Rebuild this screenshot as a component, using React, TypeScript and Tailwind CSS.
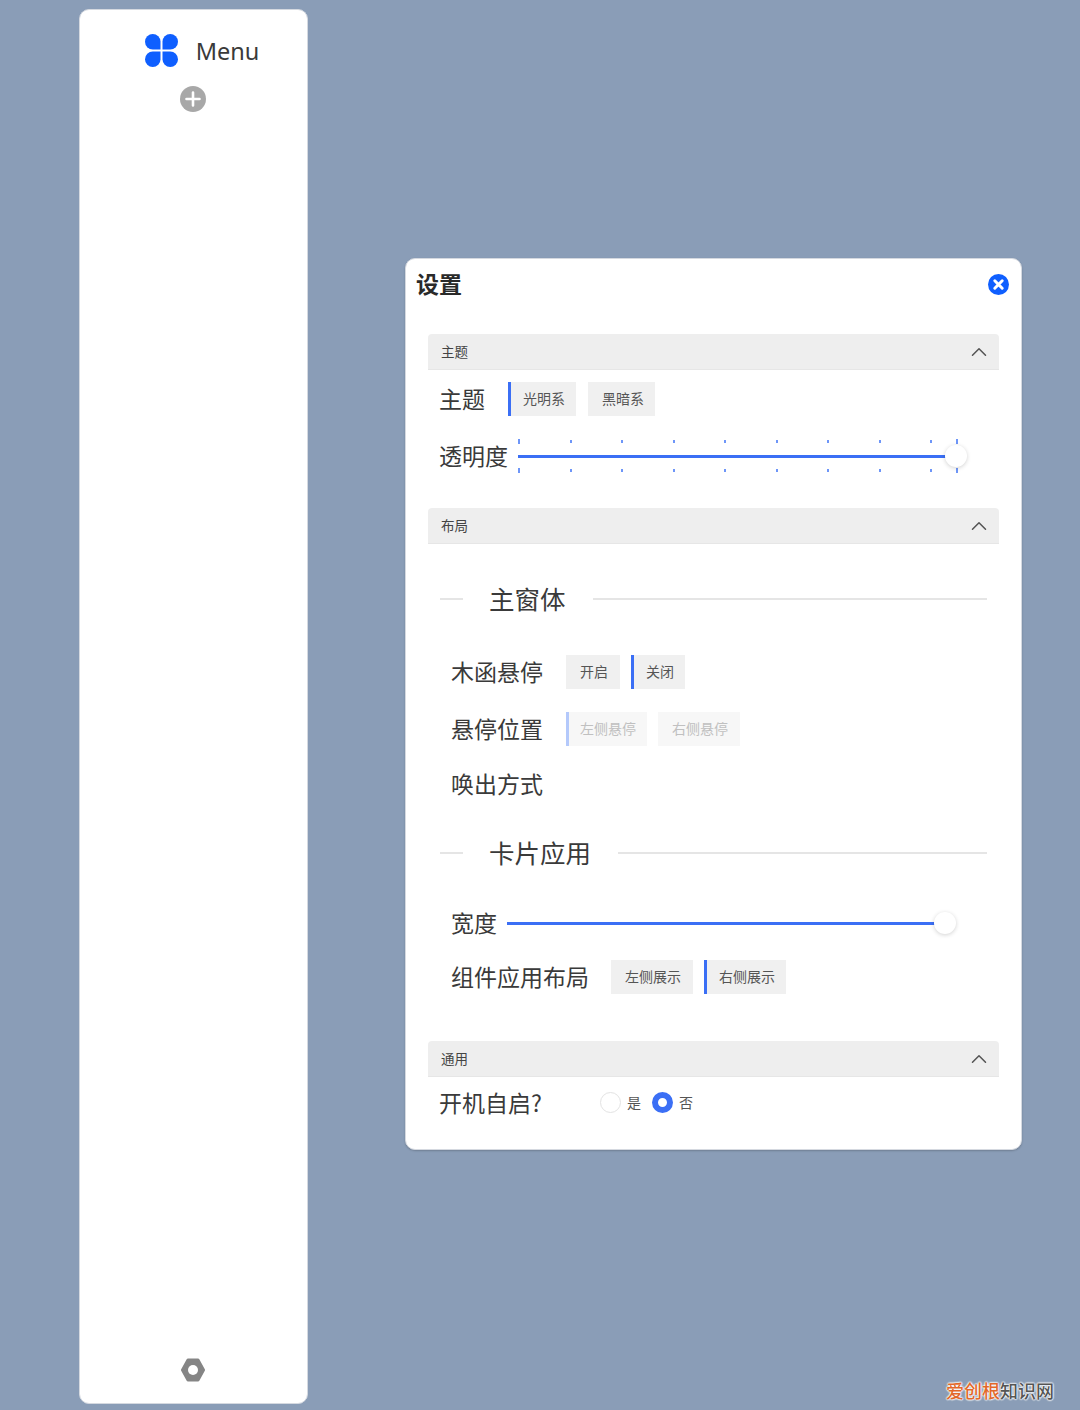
import React from "react";
import { ChevronUp } from "lucide-react";

const AccordionHead = ({ title }: { title: string }) => (
  <div className="mx-[22px] h-[36px] flex items-center justify-between pl-[13px] pr-[7px] bg-[#eeeeee] border-b border-[#e6e6e6] rounded-t-[4px] text-[13.5px] text-[#444444]">
    <span className="pb-[1px]">{title}</span>
    <ChevronUp size={26} strokeWidth={1.4} className="text-[#555555]" />
  </div>
);

const SegButton = ({
  label,
  width,
  active,
  disabled,
}: {
  label: string;
  width: string;
  active?: boolean;
  disabled?: boolean;
}) => {
  let cls = "h-[34px] pb-[2px] flex items-center whitespace-nowrap text-[14px] ";
  cls += disabled ? "bg-[#f7f7f7] text-[#c0c0c0] " : "bg-[#f0f0f0] text-[#555555] ";
  if (active) {
    cls += disabled
      ? "border-l-[3px] border-[#b4c9fb] pl-[11px] "
      : "border-l-[3px] border-[#3b6ff5] pl-[12px] ";
  } else {
    cls += "pl-[14px] ";
  }
  return <div className={cls + width}>{label}</div>;
};

const Label = ({ children, className }: { children: React.ReactNode; className?: string }) => (
  <span className={"text-[23px] leading-[32px] pb-[2px] text-[#3a3a3a] whitespace-nowrap " + (className || "")}>
    {children}
  </span>
);

const SectionTitle = ({ title, className }: { title: string; className: string }) => (
  <div className={"mx-[34px] h-[34px] flex items-center " + className}>
    <div className="w-[23px] h-[2px] bg-[#e5e5e5]" />
    <span className="ml-[26px] mr-[27px] pb-[2px] text-[25.5px] text-[#3a3a3a] whitespace-nowrap">{title}</span>
    <div className="flex-1 h-[2px] bg-[#e5e5e5]" />
  </div>
);

const Thumb = () => (
  <div className="absolute right-[-21px] top-1/2 -translate-y-1/2 w-[22px] h-[22px] rounded-full bg-white shadow-[0_1px_4px_rgba(0,0,0,0.18)]" />
);

const TickRow = () => (
  <div className="flex items-center h-[5px]">
    {[0, 1, 2, 3, 4, 5, 6, 7, 8].map((i) => (
      <div key={i} className="w-[51.5px] shrink-0 flex items-center">
        <div className={"w-[2px] bg-[#6e96f8] " + (i === 0 ? "h-[5px]" : "h-[3px]")} />
      </div>
    ))}
    <div className="ml-[-26px] w-[2px] h-[5px] bg-[#6e96f8]" />
  </div>
);

const Radio = ({ checked, label }: { checked?: boolean; label: string }) => (
  <div className="flex items-center">
    {checked ? (
      <div className="w-[21px] h-[21px] rounded-full border-[6px] border-[#3b6ff5] bg-white" />
    ) : (
      <div className="w-[21px] h-[21px] rounded-full border border-[#e3e3e3] bg-white" />
    )}
    <span className="ml-[6px] text-[14px] text-[#555555]">{label}</span>
  </div>
);

export default function App() {
  return (
    <div
      className="relative w-[1080px] h-[1410px] overflow-hidden bg-[#8a9db7] flex items-start"
      style={{ fontFamily: '"Noto Sans CJK SC", "Noto Sans", sans-serif' }}
    >
      {/* sidebar */}
      <div className="ml-[79px] mt-[9px] w-[229px] h-[1395px] bg-white rounded-[10px] border border-[#d5d9e0] flex flex-col items-center">
        <div className="mt-[24px] pl-[17px] h-[33px] flex items-center">
          <svg width="33" height="33" viewBox="0 0 34 34" fill="#0f5fff">
            <path d="M8 0a8 8 0 0 1 8 8v8H8A8 8 0 0 1 8 0z" />
            <path d="M26 0a8 8 0 0 0-8 8v8h8a8 8 0 0 0 0-16z" />
            <path d="M8 34a8 8 0 0 1 0-16h8v8a8 8 0 0 1-8 8z" />
            <path d="M26 34a8 8 0 0 0 0-16h-8v8a8 8 0 0 0 8 8z" />
          </svg>
          <span
            className="ml-[18px] pt-[2px] text-[23.5px] text-[#3a3a3a]"
            style={{ fontFamily: '"Noto Sans", sans-serif' }}
          >
            Menu
          </span>
        </div>
        <svg className="mt-[19px] mr-[1px]" width="26" height="26" viewBox="0 0 26 26">
          <circle cx="13" cy="13" r="13" fill="#a8a8a8" />
          <path d="M13 6.5v13M6.5 13h13" stroke="#fff" strokeWidth="2.6" strokeLinecap="round" />
        </svg>
        <svg className="mt-auto mb-[21px] mr-[1px]" width="24" height="24" viewBox="0 0 24 24">
          <polygon
            points="7,2 17,2 22.500,12 17,22 7,22 1.500,12"
            fill="#858585"
            stroke="#858585"
            strokeWidth="3"
            strokeLinejoin="round"
          />
          <circle cx="12" cy="12" r="5" fill="#fff" />
        </svg>
      </div>

      {/* settings dialog */}
      <div className="ml-[97px] mt-[258px] w-[617px] h-[892px] bg-white rounded-[10px] border border-[#d5d9e0] shadow-[0_1px_2px_rgba(0,0,0,0.2)] flex flex-col">
        <div className="pl-[10px] pr-[12px] pt-[9px] h-[75px] flex items-start justify-between">
          <span className="text-[23px] font-bold leading-[30px] text-[#2a2a2a]">设置</span>
          <svg className="mt-[6px]" width="21" height="21" viewBox="0 0 21 21">
            <circle cx="10.500" cy="10.500" r="10.500" fill="#0f5fff" />
            <path d="M6.800 6.800l7.400 7.400M14.200 6.800l-7.400 7.400" stroke="#fff" strokeWidth="3" strokeLinecap="round" />
          </svg>
        </div>

        <AccordionHead title="主题" />
        <div className="mt-[12px] ml-[33px] flex items-center gap-[12px]">
          <Label className="mr-[11px]">主题</Label>
          <SegButton label="光明系" width="w-[68px]" active />
          <SegButton label="黑暗系" width="w-[67px]" />
        </div>
        <div className="mt-[23px] ml-[33px] h-[34px] flex items-center">
          <Label className="mr-[10px]">透明度</Label>
          <div className="w-[440px] h-[34px] flex flex-col justify-between">
            <TickRow />
            <div className="relative h-[3px] w-[428px] bg-[#3b6ff5]">
              <Thumb />
            </div>
            <TickRow />
          </div>
        </div>

        <div className="h-[35px]" />
        <AccordionHead title="布局" />
        <SectionTitle title="主窗体" className="mt-[38px]" />
        <div className="mt-[39px] ml-[45px] flex items-center gap-[11px]">
          <Label className="mr-[12px]">木函悬停</Label>
          <SegButton label="开启" width="w-[54px]" />
          <SegButton label="关闭" width="w-[54px]" active />
        </div>
        <div className="mt-[23px] ml-[45px] flex items-center gap-[11px]">
          <Label className="mr-[12px]">悬停位置</Label>
          <SegButton label="左侧悬停" width="w-[81px]" active disabled />
          <SegButton label="右侧悬停" width="w-[82px]" disabled />
        </div>
        <div className="mt-[21px] ml-[45px] h-[34px] flex items-center">
          <Label>唤出方式</Label>
        </div>
        <SectionTitle title="卡片应用" className="mt-[35px]" />
        <div className="mt-[36px] ml-[45px] h-[34px] flex items-center">
          <Label className="mr-[10px]">宽度</Label>
          <div className="relative h-[3px] w-[428px] bg-[#3b6ff5]">
            <Thumb />
          </div>
        </div>
        <div className="mt-[20px] ml-[45px] flex items-center gap-[11px]">
          <Label className="mr-[11px]">组件应用布局</Label>
          <SegButton label="左侧展示" width="w-[82px]" />
          <SegButton label="右侧展示" width="w-[82px]" active />
        </div>

        <div className="h-[47px]" />
        <AccordionHead title="通用" />
        <div className="mt-[9px] ml-[33px] h-[34px] flex items-center">
          <Label className="w-[161px]">开机自启?</Label>
          <div className="pb-[2px] flex items-center gap-[11px]">
            <Radio label="是" />
            <Radio label="否" checked />
          </div>
        </div>
      </div>

      {/* watermark */}
      <div className="absolute left-[946px] top-[1379px] text-[18px] font-medium leading-[22px] whitespace-nowrap [text-shadow:0_0_2px_#ffffff,0_0_2px_#ffffff,0_0_2px_#ffffff,0_0_2px_#ffffff]">
        <span className="text-[#e2682a]">爱创根</span>
        <span className="text-[#555555]">知识网</span>
      </div>
    </div>
  );
}
